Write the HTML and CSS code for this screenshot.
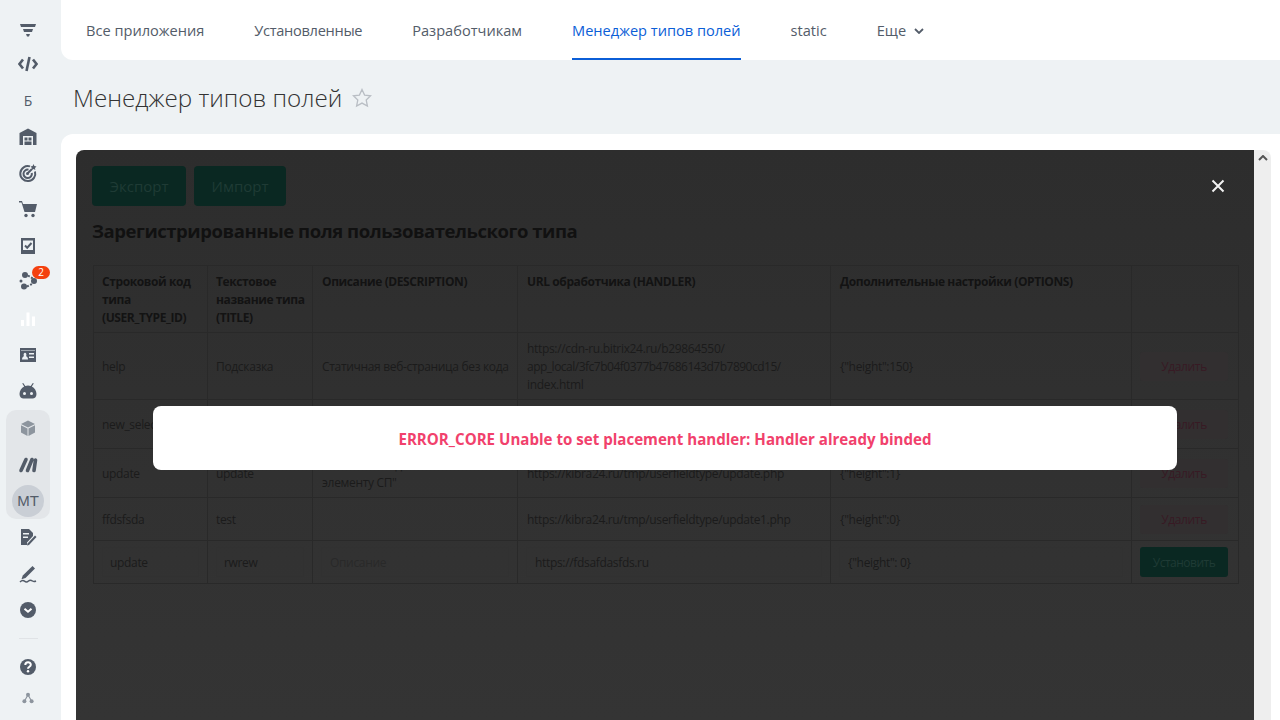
FILE: index.html
```html
<!DOCTYPE html>
<html lang="ru">
<head>
    <meta charset="UTF-8">
    <title>Менеджер типов полей</title>
    <link rel="stylesheet" href="styles.css">
</head>
<body>
    <!-- Левое меню -->
    <div class="sidebar">
        <div class="side-item first">
            <svg viewBox="0 0 20 20"><path d="M2 3h16l-1 3H3zM5 8h10l-1 3H6zM8 13h4l-1 2.500H9z"/></svg>
        </div>
        <div class="side-item">
            <svg viewBox="0 0 20 20"><path class="line bold" d="M5 5.500 1.500 10 5 14.500M15 5.500 18.500 10 15 14.500"/><path class="line bold" d="M11.500 3 8.500 17"/></svg>
        </div>
        <div class="side-item side-letter">Б</div>
        <div class="side-item">
            <svg viewBox="0 0 20 20"><path d="M10 1.500 18.500 6v12h-3.500V9H5v9H1.500V6zM6.500 10.500h3v3h-3zM10.500 10.500h3v3h-3zM6.500 14.500h7V18h-7z"/></svg>
        </div>
        <div class="side-item">
            <svg viewBox="0 0 20 20"><path class="line" d="M12 3.400A7.500 7.500 0 1 0 17 8.500"/><path class="line" d="M10.500 6.700A4.200 4.200 0 1 0 13.800 10"/><circle cx="9.500" cy="10.500" r="1.500"/><path class="line" d="M9.500 10.500 14 6"/><path d="M15.500 1l.9 2 2.100.4-1.500 1.500.3 2.100-1.800-1-1.800 1 .3-2.100L12.500 3.400l2.100-.4z"/></svg>
        </div>
        <div class="side-item cart">
            <svg viewBox="0 0 20 20"><path d="M1 2h3l1 3h14l-2 8H6.500L3.500 3.500H1z"/><circle cx="8" cy="16.500" r="1.700"/><circle cx="15" cy="16.500" r="1.700"/></svg>
        </div>
        <div class="side-item">
            <svg viewBox="0 0 20 20"><path fill-rule="evenodd" d="M3 2h14v16H3zM5 4.500v9.500h10V4.500z"/><path class="line" d="m7 9.500 2.200 2.200L13.500 7"/></svg>
        </div>
        <div class="side-item net">
            <svg viewBox="0 0 20 20"><circle cx="7" cy="4" r="3"/><circle cx="3" cy="10" r="1.500"/><circle cx="6" cy="15.500" r="3"/><circle cx="16" cy="10" r="3"/><path class="dash" d="M10 4.500 15 7.500M9 15.500 14 13"/></svg>
            <span class="badge">2</span>
        </div>
        <div class="side-item">
            <svg viewBox="0 0 20 20"><path class="white" d="M3 11h3v6H3zM8.500 3.500h3V17h-3zM14 7.500h3V17h-3z"/></svg>
        </div>
        <div class="side-item">
            <svg viewBox="0 0 20 20"><path fill-rule="evenodd" d="M2 3h16v14H2zM3 5v.5h14V5zM11 8v1.500h5V8zM11 11.500V13h5v-1.500zM4 14.500h6c0-2-1-3-2-3.300 1-1.700 0-3.500-1-3.500s-2 1.800-1 3.500c-1 .3-2 1.300-2 3.300z"/></svg>
        </div>
        <div class="side-item cart">
            <svg viewBox="0 0 20 20"><path fill-rule="evenodd" d="M5.200 2 7.300 5a7 7 0 0 1 5.400 0L14.800 2l1 .6-2 3C16.500 7 18.500 10 18.500 13c0 3-2 4.500-4 4.500h-9c-2 0-4-1.500-4-4.500 0-3 2-6 4.700-7.400l-2-3zM6.500 11a1.500 1.500 0 0 0 0 3 1.500 1.500 0 0 0 0-3zM13.500 11a1.500 1.500 0 0 0 0 3 1.500 1.500 0 0 0 0-3z"/></svg>
        </div>
        <div class="side-group">
            <div class="side-item">
                <svg viewBox="0 0 20 20"><path class="soft" d="M10 2.500 17 6l-7 3.500L3 6zM3 7.300l6.500 3.300V18L3 14.500zM17 7.300l-6.500 3.300V18l6.500-3.500z"/></svg>
            </div>
            <div class="side-item">
                <svg viewBox="0 0 20 20"><path class="line slash" d="M3 16.500 8 5.500M9.500 16.500 14 5.500M16 16.500 17.500 6"/></svg>
            </div>
            <div class="side-item">
                <div class="avatar">MT</div>
            </div>
        </div>
        <div class="side-item">
            <svg viewBox="0 0 20 20"><path d="M3 2h8l4 4v3l-6 6.500V18H3zM5 6v1.500h6V6zM5 9.500V11h5V9.500z"/><path d="M17 8.500l1.500 1.500L11 18l-2 .5.500-2z"/></svg>
        </div>
        <div class="side-item">
            <svg viewBox="0 0 20 20"><path d="M14.500 2 17 4.500 7.500 14l-4 1.200L4.800 11.500z"/><path class="line thin" d="M2 18c2-2 3-2 4.500-.8s2.500 1.200 4-.2 2.500-1 4 0 2.500.5 3.500 0"/></svg>
        </div>
        <div class="side-item">
            <svg viewBox="0 0 20 20"><circle cx="10" cy="10" r="8"/><path class="line white-line" d="m6.500 8.800 3.500 3 3.500-3"/></svg>
        </div>
        <div class="side-bottom">
            <div class="side-divider"></div>
            <div class="side-item">
                <svg viewBox="0 0 20 20"><circle cx="10" cy="10" r="8"/><path class="line white-line" d="M7.300 8c0-3.500 5.500-3.500 5.500-.3 0 2-2.800 2-2.800 4"/><circle class="white" cx="10" cy="14.300" r="1.200"/></svg>
            </div>
            <div class="side-item tree">
                <svg viewBox="0 0 20 20"><circle class="soft" cx="10" cy="6" r="2.500"/><circle class="soft" cx="5.500" cy="14" r="2.500"/><circle class="soft" cx="14.500" cy="14" r="2.500"/><path class="soft-line" d="M10 6 5.500 14M10 6l4.500 8"/></svg>
            </div>
        </div>
    </div>

    <div class="main">
        <div class="top-nav">
            <a class="nav-link" href="#">Все приложения</a>
            <a class="nav-link tight" href="#">Установленные</a>
            <a class="nav-link" href="#">Разработчикам</a>
            <a class="nav-link active" href="#">Менеджер типов полей</a>
            <a class="nav-link" href="#">static</a>
            <a class="nav-link" href="#">Еще
                <svg class="nav-arrow" viewBox="0 0 10 6"><path d="M1 1l4 4 4-4"/></svg>
            </a>
        </div>

        <div class="page-title">
            <h1>Менеджер типов полей</h1>
            <svg class="star" viewBox="0 0 20 20"><path d="M10 1.500l2.600 5.600 6 .7-4.400 4.200 1.200 6.100L10 15.100l-5.400 3 1.200-6.100L1.400 7.800l6-.7z"/></svg>
        </div>

        <div class="content">
            <div class="panel">
                <div class="buttons">
                    <button class="btn-top export">Экспорт</button>
                    <button class="btn-top import">Импорт</button>
                </div>
                <svg class="close" viewBox="0 0 14 14"><path d="M1.500 1.500l11 11M12.500 1.500l-11 11"/></svg>
                <h2>Зарегистрированные поля пользовательского типа</h2>

                <table class="types">
                    <colgroup>
                        <col class="c1"><col class="c2"><col class="c3"><col class="c4"><col class="c5"><col class="c6">
                    </colgroup>
                    <tr class="row-head">
                        <th>Строковой код<br>типа<br>(USER_TYPE_ID)</th>
                        <th>Текстовое<br>название типа<br>(TITLE)</th>
                        <th>Описание (DESCRIPTION)</th>
                        <th>URL обработчика (HANDLER)</th>
                        <th>Дополнительные настройки (OPTIONS)</th>
                        <th></th>
                    </tr>
                    <tr class="row-help">
                        <td>help</td>
                        <td>Подсказка</td>
                        <td>Статичная веб-страница без кода</td>
                        <td>https://cdn-ru.bitrix24.ru/b29864550/<br><span class="hash">app_local/3fc7b04f0377b47686143d7b7890cd15/</span><br>index.html</td>
                        <td>{"height":150}</td>
                        <td><button class="btn-del">Удалить</button></td>
                    </tr>
                    <tr class="row-49">
                        <td>new_select</td>
                        <td>select</td>
                        <td></td>
                        <td></td>
                        <td></td>
                        <td><button class="btn-del">Удалить</button></td>
                    </tr>
                    <tr class="row-49">
                        <td>update</td>
                        <td>update</td>
                        <td>Обновление данных по<br>элементу СП"</td>
                        <td>https://kibra24.ru/tmp/userfieldtype/update.php</td>
                        <td>{"height":1}</td>
                        <td><button class="btn-del">Удалить</button></td>
                    </tr>
                    <tr class="row-43">
                        <td>ffdsfsda</td>
                        <td>test</td>
                        <td></td>
                        <td>https://kibra24.ru/tmp/userfieldtype/update1.php</td>
                        <td>{"height":0}</td>
                        <td><button class="btn-del">Удалить</button></td>
                    </tr>
                    <tr class="row-43 row-form">
                        <td><input class="field" value="update"></td>
                        <td><input class="field" value="rwrew"></td>
                        <td><input class="field" placeholder="Описание"></td>
                        <td><input class="field" value="https://fdsafdasfds.ru"></td>
                        <td><input class="field" value='{"height": 0}'></td>
                        <td><button class="btn-install">Установить</button></td>
                    </tr>
                </table>

                <div class="alert-box">ERROR_CORE Unable to set placement handler: Handler already binded</div>
            </div>
            <div class="scrollbar">
                <svg viewBox="0 0 10 6"><path d="M1 5l4-4 4 4"/></svg>
            </div>
        </div>
    </div>
</body>
</html>
```

FILE: styles.css
```css
html, body {
    height: 100%;
}
body {
    font-family: 'Open Sans', sans-serif;
    margin: 0;
    display: flex;
    overflow: hidden;
    background-color: #eef2f4;
}

/* sidebar */
.sidebar {
    width: 61px;
    flex-shrink: 0;
    box-sizing: border-box;
    padding: 13px 11px 0 6px;
    display: flex;
    flex-direction: column;
}
.side-item {
    position: relative;
    height: 36.4px;
    display: flex;
    align-items: center;
    justify-content: center;
    flex-shrink: 0;
}
.side-item.first {
    margin-bottom: -3.4px;
}
.side-item svg {
    width: 20px;
    height: 20px;
    fill: #535c69;
}
.side-item.cart svg {
    margin-top: -2px;
}
.side-item.net svg {
    margin-top: -3px;
}
.side-item.tree svg {
    width: 16px;
    height: 16px;
}
.side-letter {
    font-size: 14px;
    color: #535c69;
}
.line {
    fill: none;
    stroke: #535c69;
    stroke-width: 2;
}
.line.bold {
    stroke-width: 2.6;
}
.line.slash {
    stroke-width: 3.6;
    stroke-linecap: round;
}
.line.thin {
    stroke-width: 1.5;
}
.line.white-line {
    stroke: #fff;
}
.dash {
    fill: none;
    stroke: #535c69;
    stroke-width: 2;
    stroke-dasharray: 2 1.5;
}
.side-item svg .white {
    fill: #fff;
}
.side-item svg .soft {
    fill: #8d959e;
}
.soft-line {
    fill: none;
    stroke: #8d959e;
    stroke-width: 1.5;
}
.badge {
    position: absolute;
    left: 26px;
    top: 2px;
    width: 18px;
    height: 13px;
    border-radius: 7px;
    background: #f4410f;
    color: #fff;
    font-size: 10px;
    line-height: 13px;
    text-align: center;
}
.side-group {
    background: #e3e6e9;
    border-radius: 10px;
}
.avatar {
    width: 32px;
    height: 32px;
    border-radius: 50%;
    background: #c9ced5;
    color: #535c69;
    font-family: 'Liberation Sans', sans-serif;
    font-size: 15px;
    line-height: 32px;
    text-align: center;
}
.side-bottom {
    margin-top: 10px;
}
.side-divider {
    width: 19px;
    margin: 0 auto 10px;
    border-top: 1px solid #e0e3e6;
}
.side-bottom .side-item.tree {
    margin-top: -6px;
}

/* top part */
.main {
    flex-grow: 1;
    min-width: 0;
    display: flex;
    flex-direction: column;
}
.top-nav {
    height: 60px;
    flex-shrink: 0;
    display: flex;
    gap: 50px;
    padding-left: 25px;
    background: white;
    border-bottom-left-radius: 12px;
}
.nav-link {
    display: flex;
    align-items: center;
    gap: 8px;
    box-sizing: border-box;
    height: 60px;
    padding-top: 2px;
    font-size: 14.6px;
    color: #535c69;
    text-decoration: none;
    border-bottom: 2px solid transparent;
}
.nav-link.tight {
    letter-spacing: -0.3px;
}
.nav-link.active {
    color: #0b5ed7;
    border-bottom-color: #0b5ed7;
}
.nav-arrow {
    width: 10px;
    height: 6px;
    margin-top: 2px;
    fill: none;
    stroke: #535c69;
    stroke-width: 1.8;
}
.page-title {
    height: 74px;
    flex-shrink: 0;
    display: flex;
    align-items: center;
    gap: 10px;
    padding: 1px 0 0 12px;
    box-sizing: border-box;
}
.page-title h1 {
    margin: 0;
    font-size: 24.2px;
    font-weight: 300;
    color: #333;
}
.star {
    width: 20px;
    height: 20px;
    fill: none;
    stroke: #b9bec4;
    stroke-width: 1.3;
}

/* white card with app */
.content {
    flex-grow: 1;
    min-height: 0;
    display: flex;
    padding: 16px 9px 0 15px;
    background: white;
    border-top-left-radius: 12px;
}
.panel {
    position: relative;
    flex-grow: 1;
    min-width: 0;
    padding: 16px 16px 0;
    box-sizing: border-box;
    background: linear-gradient(#2d2d2d, #343434);
    border-top-left-radius: 8px;
}
.scrollbar {
    width: 17px;
    flex-shrink: 0;
    background: #eee;
    border-top-right-radius: 8px;
    text-align: center;
}
.scrollbar svg {
    display: block;
    width: 10px;
    height: 6px;
    margin: 5px auto 0;
    fill: none;
    stroke: #555;
    stroke-width: 2;
}
.buttons {
    display: flex;
    gap: 8px;
}
.btn-top {
    height: 40px;
    padding: 0;
    border: 0;
    border-radius: 4px;
    background: #0a2822;
    color: #1f3b35;
    font-family: inherit;
    font-size: 15px;
}
.btn-top.export {
    width: 94px;
}
.btn-top.import {
    width: 92px;
}
.close {
    position: absolute;
    top: 29px;
    right: 29px;
    width: 14px;
    height: 14px;
    fill: none;
    stroke: #f2f2f2;
    stroke-width: 2;
}
h2 {
    margin: 11px 0 21px;
    font-size: 18.5px;
    line-height: 27px;
    letter-spacing: -0.45px;
    font-weight: 700;
    color: #111;
}

/* table */
.types {
    width: 1145px;
    margin-left: 1px;
    border-collapse: collapse;
    table-layout: fixed;
    font-size: 12px;
    line-height: 18px;
    letter-spacing: -0.33px;
    color: #1b1b1b;
}
.c1 { width: 114px; }
.c2 { width: 105px; }
.c3 { width: 205px; }
.c4 { width: 313px; }
.c5 { width: 301px; }
.c6 { width: 107px; }
.types th, .types td {
    border: 1px solid #292929;
    padding: 2px 8px 0 9px;
    text-align: left;
}
.types th {
    padding: 7px 0 0 9px;
    vertical-align: top;
    color: #131313;
    font-weight: 700;
    letter-spacing: -0.4px;
}
.types th:nth-child(-n+2), .types td:nth-child(-n+2) {
    padding-left: 8px;
}
.types td:last-child, .types .row-form td {
    padding: 0 8px;
}
.hash {
    letter-spacing: -0.5px;
}
.row-head { height: 67px; }
.row-help { height: 67px; }
.row-49 { height: 49px; }
.row-43 { height: 43px; }
.btn-del, .btn-install {
    display: block;
    width: 88px;
    height: 29px;
    padding: 0;
    border: 0;
    border-radius: 3px;
    font-family: inherit;
    font-size: 12px;
    letter-spacing: -0.35px;
}
.btn-del {
    background: #322f30;
    color: #381a24;
}
.btn-install {
    height: 30px;
    background: #0a2822;
    color: #1f3b35;
    letter-spacing: -0.5px;
}
.field {
    display: block;
    width: 100%;
    height: 30px;
    box-sizing: border-box;
    padding: 0 8px;
    border: 1px solid #313131;
    background: transparent;
    color: #1b1b1b;
    font-family: inherit;
    font-size: 12px;
    letter-spacing: -0.33px;
}
.row-form td:nth-child(-n+2) .field {
    padding: 0 7px;
}
.field::placeholder {
    color: #292929;
}

/* error popup */
.alert-box {
    position: absolute;
    top: 256px;
    left: 77px;
    right: 77px;
    height: 64px;
    padding-top: 2px;
    box-sizing: border-box;
    display: flex;
    align-items: center;
    justify-content: center;
    background: white;
    border-radius: 8px;
    color: #f1416c;
    font-size: 15.1px;
    font-weight: 700;
}
```
